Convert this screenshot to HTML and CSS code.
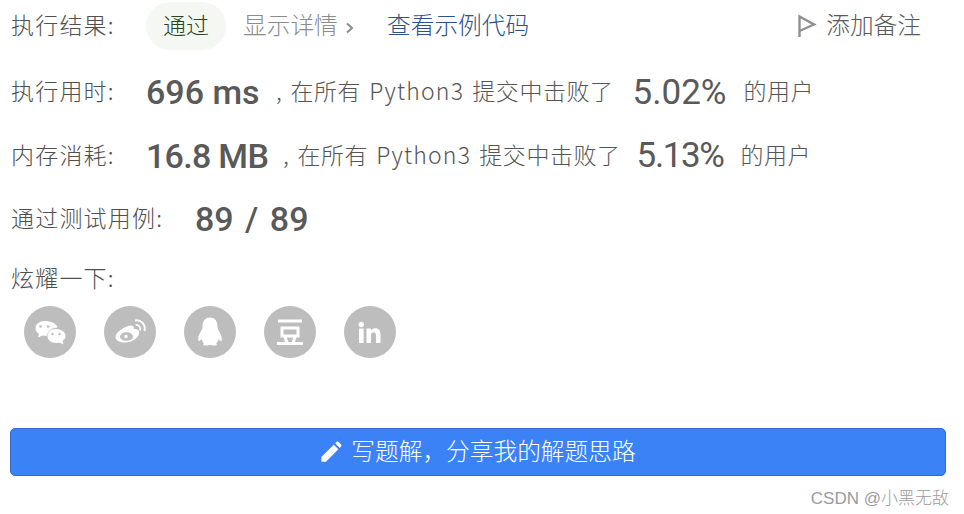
FILE: index.html
```html
<!DOCTYPE html>
<html>
	<head>
		<meta charset="UTF-8">
		<title>执行结果</title>
		<link rel="stylesheet" href="styles.css">
	</head>
	<body>
		<div class="panel">
			<div class="row rowResult">
				<span class="label labelResult">执行结果:</span>
				<span class="statusPill"><span class="cjkText">通过</span></span>
				<span class="detailLink cjkText">显示详情
					<svg class="chevron" width="9" height="12" viewBox="0 0 9 12"><path d="M2 1.500 L7 6 L2 10.500" fill="none" stroke="#8c8c8c" stroke-width="2"/></svg>
				</span>
				<span class="codeLink cjkText">查看示例代码</span>
				<span class="noteLink">
					<svg class="flag" width="20" height="24" viewBox="0 0 20 24"><path d="M2.500 23 V2.500 L17 10.500 L2.500 17" fill="none" stroke="#8f8f8f" stroke-width="2.400"/></svg>
					<span class="cjkText">添加备注</span>
				</span>
			</div>

			<div class="row rowTime">
				<span class="label labelStat">执行用时:</span>
				<span class="bigNum numTime">696 ms</span>
				<span class="sentence">, 在所有 <span class="latin">Python3</span> 提交中击败了</span>
				<span class="percent percentTime">5.02%</span>
				<span class="sentence">的用户</span>
			</div>

			<div class="row rowMemory">
				<span class="label labelStat">内存消耗:</span>
				<span class="bigNum numMemory">16.8 MB</span>
				<span class="sentence">, 在所有 <span class="latin">Python3</span> 提交中击败了</span>
				<span class="percent percentMemory">5.13%</span>
				<span class="sentence">的用户</span>
			</div>

			<div class="row rowCases">
				<span class="label labelCases">通过测试用例:</span>
				<span class="bigNum numCases">89 / 89</span>
			</div>

			<div class="row rowShareLabel">
				<span class="label">炫耀一下:</span>
			</div>

			<div class="shareIcons">
				<span class="shareIcon">
					<svg width="52" height="52" viewBox="0 0 52 52">
						<path d="M20.500 15 C15.500 15 11.500 18 11.500 22 C11.500 24.500 12.800 26.500 15 28 L14 31.500 L18.500 29.500 C19.800 29.800 21 30 22.500 30 C24 25 28 21.500 33.500 21.500 C32.500 17.500 27 15 20.500 15 Z" fill="#fff"/>
						<path d="M32 23 C27 23 23.500 26 23.500 30 C23.500 34 27 37 32 37 C33.500 37 34.500 36.800 35.500 36.400 L39.500 38.500 L38.500 35 C40.500 33.500 41.500 32 41.500 30 C41.500 26 37.500 23 32 23 Z" fill="#fff"/>
						<circle cx="16.500" cy="20.500" r="1.300" fill="#bdbdbd"/>
						<circle cx="24" cy="20.500" r="1.300" fill="#bdbdbd"/>
						<circle cx="28.500" cy="28" r="1.200" fill="#bdbdbd"/>
						<circle cx="35.500" cy="28" r="1.200" fill="#bdbdbd"/>
					</svg>
				</span>
				<span class="shareIcon">
					<svg width="52" height="52" viewBox="0 0 52 52">
						<path d="M22 21 C27 18.500 30.500 19.500 30 23 C34 22.500 36 25 35 28 C33.500 32.500 27.500 36.500 21 36.500 C15.500 36.500 11.500 34.500 11.500 31 C11.500 27.500 16.500 23 22 21 Z" fill="#fff"/>
						<ellipse cx="22.500" cy="30.500" rx="6.500" ry="4.300" fill="#bdbdbd"/>
						<circle cx="22" cy="30.500" r="1.800" fill="#fff"/>
						<path d="M31 14.500 C37 13.500 42 18.500 40.500 25" fill="none" stroke="#fff" stroke-width="2"/>
						<path d="M31.500 19 C34.500 18.500 37 21 36 24.500" fill="none" stroke="#fff" stroke-width="1.600"/>
					</svg>
				</span>
				<span class="shareIcon">
					<svg width="52" height="52" viewBox="0 0 52 52">
						<path d="M26 11.500 C20.500 11.500 18.500 16 18.500 20.500 C18.500 23 17.500 24 16.500 26 C14.500 29 13.500 33 14.500 35 C15.500 35.500 16.500 34 17.500 33 C18 35 19 36.500 20 37.500 C18.500 38.500 19 39.500 22 39.500 C24 39.500 25 39 26 39 C27 39 28 39.500 30 39.500 C33 39.500 33.500 38.500 32 37.500 C33 36.500 34 35 34.500 33 C35.500 34 36.500 35.500 37.500 35 C38.500 33 37.500 29 35.500 26 C34.500 24 33.500 23 33.500 20.500 C33.500 16 31.500 11.500 26 11.500 Z" fill="#fff"/>
					</svg>
				</span>
				<span class="shareIcon">
					<svg width="52" height="52" viewBox="0 0 52 52">
						<path d="M14 15 H38 M18 22 H34 V30 H18 Z M21 31 L23 37 M31 31 L29 37 M13 37.500 H39" fill="none" stroke="#fff" stroke-width="3"/>
					</svg>
				</span>
				<span class="shareIcon">
					<svg width="52" height="52" viewBox="0 0 52 52">
						<rect x="15" y="22.500" width="4.600" height="14.500" fill="#fff"/>
						<circle cx="17.300" cy="18.500" r="2.700" fill="#fff"/>
						<path d="M22.500 22.500 H26.800 V24.800 C27.800 23.200 29.300 22.200 31.200 22.200 C35 22.200 36.500 24.800 36.500 29 V37 H32 V29.800 C32 27.500 31.300 26.200 29.700 26.200 C27.800 26.200 27 27.700 27 30 V37 H22.500 Z" fill="#fff"/>
					</svg>
				</span>
			</div>

			<div class="solutionBtn">
				<svg class="pencil" width="22" height="22" viewBox="0 0 24 24"><path d="M1.500 22.500 V17.500 L15 4 L20 9 L6.500 22.500 Z M16.500 2.500 L18 1 C18.800 .4 19.600 .4 20.300 1 L23 3.700 C23.600 4.400 23.600 5.200 23 6 L21.500 7.500 Z" fill="#fff"/></svg>
				<span class="cjkText">写题解&#xFF0C;分享我的解题思路</span>
			</div>

			<div class="watermark">CSDN @小黑无敌</div>
		</div>
	</body>
</html>
```

FILE: styles.css
```css
body {
	margin: 0;
	background-color: white;
	font-family: 'Noto Sans CJK SC', 'Noto Sans', sans-serif;
	font-weight: 300;
	color: rgba(80,80,80,1);
}

.panel {
	position: relative;
	height: 514px;
	padding: 0 18px 0 11px;
	box-sizing: border-box;
	overflow: hidden;
}

.row {
	display: flex;
	align-items: center;
	white-space: nowrap;
}

.rowResult {
	height: 50px;
	margin-top: 1px;
}

.rowTime {
	height: 64px;
	margin-top: 9px;
}

.rowMemory {
	height: 63px;
}

.rowCases {
	height: 64px;
}

.rowShareLabel {
	height: 56px;
}

/* the CJK glyphs sit low in their line box, this lifts them back to the middle */
.cjkText,
.label,
.sentence {
	padding-bottom: 4px;
}

.label {
	font-size: 23px;
	letter-spacing: 1.2px;
}

.labelResult,
.labelStat {
	width: 135px;
}

.labelCases {
	width: 184px;
}

.statusPill {
	width: 80px;
	height: 48px;
	border-radius: 24px;
	background-color: rgba(245,248,242,1);
	color: rgba(38,70,30,1);
	font-size: 23px;
	display: flex;
	align-items: center;
	justify-content: center;
}

.detailLink {
	margin-left: 17px;
	width: 144px;
	color: rgba(140,140,140,1);
	font-size: 23.7px;
}

.chevron {
	margin-left: 2px;
}

.codeLink {
	color: rgba(44,82,138,1);
	font-size: 23.7px;
}

.noteLink {
	margin-left: auto;
	margin-right: 25px;
	display: flex;
	align-items: center;
	gap: 9px;
	font-size: 23.7px;
	color: rgba(90,90,90,1);
}

.bigNum {
	font-family: 'Roboto', sans-serif;
	font-weight: 500;
	font-size: 34px;
	color: rgba(89,89,89,1);
}

.numTime {
	width: 130px;
}

.numMemory {
	width: 137px;
	letter-spacing: -0.7px;
}

.numCases {
	word-spacing: 3px;
}

.sentence {
	font-size: 23px;
	letter-spacing: 0.55px;
	word-spacing: 2.5px;
	color: rgba(85,85,85,1);
}

.latin {
	letter-spacing: 1.2px;
}

.percent {
	font-family: 'Roboto', sans-serif;
	font-size: 35px;
	font-weight: 400;
	color: rgba(89,89,89,1);
}

.percentTime {
	margin: 0 17px 0 19px;
}

.percentMemory {
	margin: 0 17px 0 16px;
	letter-spacing: -1.4px;
}

.shareIcons {
	display: flex;
	gap: 28px;
	padding-left: 13px;
	margin-top: -1px;
}

.shareIcon {
	width: 52px;
	height: 52px;
	border-radius: 50%;
	background-color: rgba(189,189,189,1);
	display: block;
}

.shareIcon svg {
	display: block;
}

.solutionBtn {
	height: 48px;
	margin-top: 70px;
	margin-left: -1px;
	background-color: rgba(59,130,246,1);
	border: 1px solid rgba(52,105,200,1);
	border-radius: 5px;
	box-sizing: border-box;
	display: flex;
	align-items: center;
	justify-content: center;
	gap: 9px;
	color: white;
	font-size: 23.7px;
}

.watermark {
	position: absolute;
	right: 15px;
	top: 484px;
	font-family: 'Liberation Sans', 'Noto Sans CJK SC', sans-serif;
	font-size: 17px;
	color: rgba(155,155,155,1);
}
```
